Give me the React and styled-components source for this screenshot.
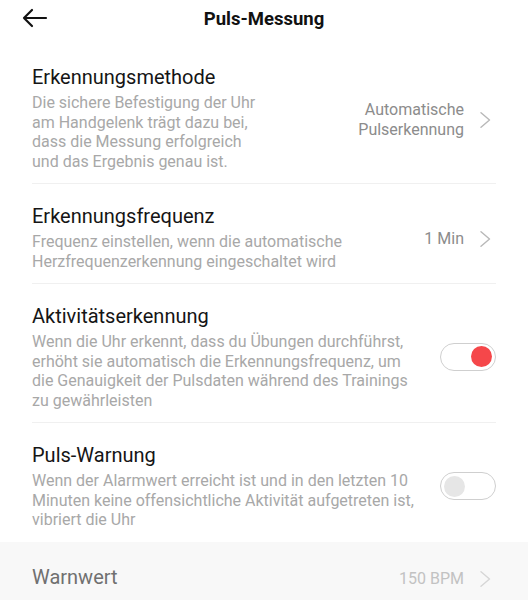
import styled, { createGlobalStyle } from "styled-components";

const GlobalStyle = createGlobalStyle`
  html, body {
    margin: 0;
    padding: 0;
    background: #ffffff;
    font-family: Roboto, "Noto Sans", "Liberation Sans", sans-serif;
  }
`;

const settings = [
  {
    title: "Erkennungsmethode",
    desc: [
      "Die sichere Befestigung der Uhr",
      "am Handgelenk trägt dazu bei,",
      "dass die Messung erfolgreich",
      "und das Ergebnis genau ist.",
    ],
    value: ["Automatische", "Pulserkennung"],
  },
  {
    title: "Erkennungsfrequenz",
    desc: [
      "Frequenz einstellen, wenn die automatische",
      "Herzfrequenzerkennung eingeschaltet wird",
    ],
    value: ["1 Min"],
  },
  {
    title: "Aktivitätserkennung",
    desc: [
      "Wenn die Uhr erkennt, dass du Übungen durchführst,",
      "erhöht sie automatisch die Erkennungsfrequenz, um",
      "die Genauigkeit der Pulsdaten während des Trainings",
      "zu gewährleisten",
    ],
    toggle: true,
  },
  {
    title: "Puls-Warnung",
    desc: [
      "Wenn der Alarmwert erreicht ist und in den letzten 10",
      "Minuten keine offensichtliche Aktivität aufgetreten ist,",
      "vibriert die Uhr",
    ],
    toggle: false,
  },
];

const Chevron = ({ color }) => (
  <ChevronSvg width="18" height="16" viewBox="0 0 18 16">
    <path
      d="M3 0.8 L11.5 8 L3 15.2"
      fill="none"
      stroke={color}
      strokeWidth="1.4"
      strokeLinejoin="round"
      strokeLinecap="round"
    />
  </ChevronSvg>
);

function App() {
  return (
    <Page>
      <GlobalStyle />
      <Header>
        <BackBtn>
          <svg width="26" height="20" viewBox="0 0 26 20">
            <path
              d="M24 10 H2 M10 2 L2 10 L10 18"
              fill="none"
              stroke="#111"
              strokeWidth="2.2"
              strokeLinecap="round"
              strokeLinejoin="round"
            />
          </svg>
        </BackBtn>
        <Title>Puls-Messung</Title>
      </Header>

      <List>
        {settings.map((s, i) => (
          <Row key={s.title} last={i === settings.length - 1}>
            <TextCol>
              <RowTitle>{s.title}</RowTitle>
              <Desc>
                {s.desc.map((line) => (
                  <span key={line}>{line}</span>
                ))}
              </Desc>
            </TextCol>
            {s.value && (
              <ValueWrap>
                <Value>
                  {s.value.map((v) => (
                    <span key={v}>{v}</span>
                  ))}
                </Value>
                <Chevron color="#b8b8b8" />
              </ValueWrap>
            )}
            {s.toggle !== undefined && (
              <Switch on={s.toggle}>
                <Knob on={s.toggle} />
              </Switch>
            )}
          </Row>
        ))}
      </List>

      <DisabledRow>
        <DisabledTitle>Warnwert</DisabledTitle>
        <ValueWrap>
          <DisabledValue>150 BPM</DisabledValue>
          <Chevron color="#d6d6d6" />
        </ValueWrap>
      </DisabledRow>
    </Page>
  );
}

const Page = styled.div`
  width: 528px;
  height: 600px;
  overflow: hidden;
  background: #ffffff;
  display: flex;
  flex-direction: column;
`;

const Header = styled.div`
  position: relative;
  height: 36px;
  display: flex;
  align-items: center;
  justify-content: center;
`;

const BackBtn = styled.div`
  position: absolute;
  left: 22px;
  top: 8px;
  display: flex;
`;

const Title = styled.div`
  font-size: 18.5px;
  font-weight: 700;
  color: #111;
  margin-top: 2px;
`;

const List = styled.div`
  padding: 10px 32px 0 32px;
  display: flex;
  flex-direction: column;
`;

const Row = styled.div`
  display: flex;
  align-items: center;
  justify-content: space-between;
  padding: 19px 0 12px;
  border-bottom: ${(p) => (p.last ? "none" : "1px solid #f0f0f0")};
`;

const TextCol = styled.div`
  display: flex;
  flex-direction: column;
`;

const RowTitle = styled.div`
  font-size: 20px;
  line-height: 26px;
  color: #151515;
`;

const Desc = styled.div`
  margin-top: 3px;
  display: flex;
  flex-direction: column;
  font-size: 16px;
  line-height: 19.5px;
  color: #a8a8a8;
`;

const ValueWrap = styled.div`
  display: flex;
  align-items: center;
  padding-top: 4px;
`;

const Value = styled.div`
  display: flex;
  flex-direction: column;
  align-items: flex-end;
  font-size: 16px;
  line-height: 20px;
  color: #8c8c8c;
`;

const ChevronSvg = styled.svg`
  margin-left: 14px;
  flex-shrink: 0;
`;

const Switch = styled.div`
  box-sizing: border-box;
  width: 56px;
  height: 28px;
  border: 1px solid #cfcfcf;
  border-radius: 14px;
  display: flex;
  align-items: center;
  justify-content: ${(p) => (p.on ? "flex-end" : "flex-start")};
  padding: 0 3px;
  flex-shrink: 0;
`;

const Knob = styled.div`
  width: 21px;
  height: 21px;
  border-radius: 50%;
  background: ${(p) => (p.on ? "#f5474a" : "#e6e6e6")};
`;

const DisabledRow = styled.div`
  margin-top: auto;
  height: 59px;
  background: #f8f8f8;
  display: flex;
  align-items: center;
  justify-content: space-between;
  padding: 12px 32px 0;
  box-sizing: border-box;
`;

const DisabledTitle = styled.div`
  font-size: 20px;
  line-height: 26px;
  color: #707070;
`;

const DisabledValue = styled.div`
  font-size: 16px;
  line-height: 20px;
  color: #c2c2c2;
`;

export default App;
